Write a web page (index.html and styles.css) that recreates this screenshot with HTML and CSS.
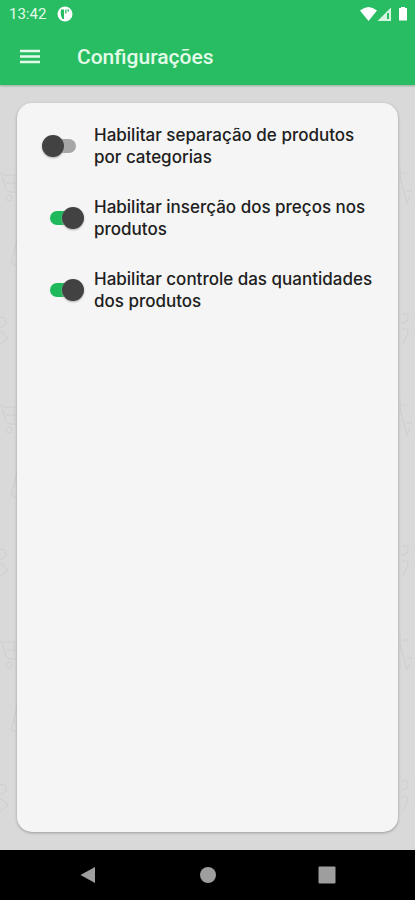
FILE: index.html
```html
<!DOCTYPE html>
<html lang="pt-BR">
<head>
<meta charset="utf-8">
<meta name="viewport" content="width=device-width, initial-scale=1">
<title>Configurações</title>
<link rel="stylesheet" href="styles.css">
</head>
<body>
<header class="header">
  <div class="status">
    <time>13:42</time>
    <svg class="notice" width="16" height="16" viewBox="0 0 16 16" aria-hidden="true"><circle cx="8" cy="8" r="7.5" fill="#fff"/><path d="M4 3.500h3V13H5.500Q3 9 4 3.500zM8.200 3.500h1.300v4H8.200zM10.500 3.500h1.500v2h-1.500z" fill="#28bd62"/></svg>
    <svg class="signals" width="48" height="16" viewBox="0 0 48 16" aria-hidden="true"><path d="M0 4.500Q8.500-2.500 17 4.500L8.500 15z" fill="#fff"/><path d="M31 1.500V15H17.500z" fill="#d5f5e0"/><path d="M27 7h2v6h-2z" fill="#28bd62"/><path d="M39 2h2V1h4v1h2v12.500h-8z" fill="#fff"/></svg>
  </div>
  <div class="appbar">
    <button class="menu" type="button" aria-label="Menu"><svg width="22" height="16" viewBox="0 0 22 16"><path d="M1 2h20M1 7.500h20M1 13h20" stroke="#e2fbe9" stroke-width="2.600"/></svg></button>
    <h1>Configurações</h1>
  </div>
</header>
<main class="content">
  <svg class="pattern" aria-hidden="true">
    <defs>
      <g id="cart"><path d="M-3 0L1 4 6 20Q8 24 16 23M3 6H20M6 14H20M14 6V20"/><circle cx="9" cy="29" r="3"/></g>
      <g id="bottle"><path d="M17 0L15 9 11 24 17 26M14 15H18"/></g>
      <g id="hearts"><path d="M-2 2Q5-2 6 4T-2 10M-2 18Q1 12 4 17L8 21-2 29"/></g>
      <g id="band"><use href="#cart" y="84"/><use href="#bottle" y="154"/><use href="#hearts" y="232"/></g>
      <g id="edge"><path d="M2 82V92L9 118M4 88H10M8 106H14M12 112L9 118M4 230Q10 226 10 232T3 238M3 246Q10 240 10 249L5 258"/></g>
    </defs>
    <g class="doodles"><use href="#band"/><use href="#band" y="232"/><use href="#band" y="467"/></g>
    <svg x="100%" overflow="visible"><g class="doodles" transform="translate(-17 0)"><use href="#edge"/><use href="#edge" y="232"/><use href="#edge" y="467"/></g></svg>
  </svg>
  <section class="card">
    <label class="option"><input class="switch" type="checkbox"><span>Habilitar separação de produtos por categorias</span></label>
    <label class="option"><input class="switch" type="checkbox" checked><span>Habilitar inserção dos preços nos produtos</span></label>
    <label class="option"><input class="switch" type="checkbox" checked><span>Habilitar controle das quantidades dos produtos</span></label>
  </section>
</main>
<nav class="navbar" aria-label="Sistema">
  <button type="button" aria-label="Voltar"><svg width="18" height="18" viewBox="0 0 18 18"><path d="M1.500 9L16 1v16z"/></svg></button>
  <button type="button" aria-label="Início"><svg width="18" height="18" viewBox="0 0 18 18"><circle cx="9" cy="9" r="8"/></svg></button>
  <button type="button" aria-label="Recentes"><svg width="18" height="18" viewBox="0 0 18 18"><rect x=".5" y=".5" width="17" height="17" rx="1"/></svg></button>
</nav>
</body>
</html>
```
FILE: styles.css
```css
* { box-sizing: border-box; }
body {
  margin: 0;
  min-height: 100vh;
  display: flex;
  flex-direction: column;
  background: #d9d9d9;
  font-family: Roboto, "Liberation Sans", sans-serif;
}
button { border: 0; padding: 0; background: none; display: flex; }
.header {
  background: #28bd62;
  color: #e2fbe9;
  box-shadow: 0 1px 2px #8fae9a;
  z-index: 1;
}
.status {
  display: flex;
  align-items: center;
  height: 28px;
  padding: 0 7px 0 9px;
  font-size: 15px;
}
.notice { margin-left: 11px; }
.signals { margin-left: auto; }
.appbar {
  display: flex;
  align-items: center;
  gap: 36px;
  height: 57px;
  padding: 0 19px;
}
h1 { margin: 0; font-size: 21px; font-weight: 500; line-height: 28px; }
.content {
  position: relative;
  flex: 1;
  display: flex;
  padding: 18px 17px;
}
.pattern { position: absolute; inset: 0; width: 100%; height: 100%; }
.doodles { fill: none; stroke: #cecece; stroke-width: 1; }
.card {
  position: relative;
  flex: 1;
  display: flex;
  flex-direction: column;
  gap: 28px;
  padding: 21px 20px 21px 25px;
  border-radius: 15px;
  background: #f5f5f5;
  box-shadow: 0 1px 3px #999;
}
.option {
  display: grid;
  grid-template-columns: 42px 1fr;
  column-gap: 10px;
  align-items: center;
  color: #202020;
  font: 500 17px/22px Inter, "Open Sans", sans-serif;
}
.switch {
  appearance: none;
  display: grid;
  align-items: center;
  justify-items: end;
  width: 34px;
  height: 22px;
  margin: 0;
}
.switch::before,
.switch::after {
  content: "";
  grid-area: 1 / 1;
}
.switch::before {
  width: 28px;
  height: 14px;
  border-radius: 7px;
  background: #a6a6a6;
}
.switch::after {
  justify-self: start;
  width: 22px;
  height: 22px;
  border-radius: 50%;
  background: #424242;
  box-shadow: 0 1px 2px #aaa;
}
.switch:checked { justify-self: end; }
.switch:checked::before { justify-self: start; background: #1fb85b; }
.switch:checked::after { justify-self: end; }
.navbar {
  display: flex;
  justify-content: space-between;
  align-items: center;
  height: 50px;
  padding: 0 79px;
  background: #000;
}
.navbar svg { fill: #9e9e9e; }
```
